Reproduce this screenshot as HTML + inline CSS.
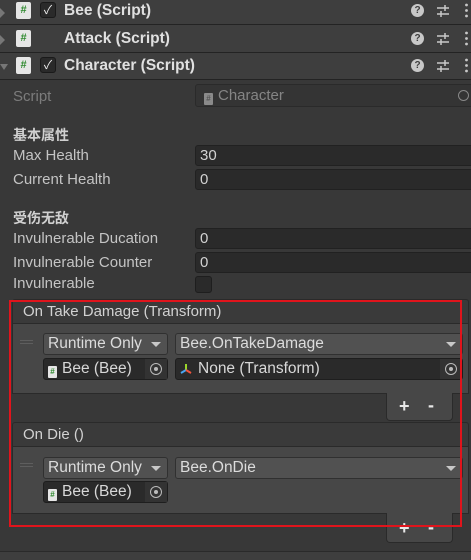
<!DOCTYPE html>
<html><head><meta charset="utf-8"><style>
*{box-sizing:border-box;margin:0;padding:0}
body{width:471px;height:560px;overflow:hidden;background:#383838;font-family:"Liberation Sans","Noto Sans CJK SC",sans-serif;position:relative;color:#c4c4c4}
.a{position:absolute}
.hdr{position:absolute;left:0;width:471px;height:27px;background:#3e3e3e;border-bottom:1px solid #232323}
.hdr .t{position:absolute;left:64px;top:4px;font-size:15.5px;font-weight:bold;color:#e0e0e0}
.si{position:absolute;left:16px;top:4px;width:15px;height:17px;background:#e6e6e6;border-radius:2px;color:#2f8a2f;font-size:11px;font-weight:bold;text-align:center;line-height:17px}
.cb{position:absolute;left:40px;top:4px;width:16px;height:16px;background:#2a2a2a;border:1px solid #1a1a1a;border-radius:3px;color:#eee;font-size:12px;text-align:center;line-height:14px}
.q{position:absolute;left:411px;top:6px;width:13px;height:13px;border-radius:50%;background:#c8c8c8;color:#3e3e3e;font-size:10px;font-weight:bold;text-align:center;line-height:13px}
.sl{position:absolute;left:436px;top:6px;width:14px;height:14px}
.dt{position:absolute;left:465px;top:5px;width:3px;height:15px}
.lbl{position:absolute;left:13px;font-size:15px;color:#c4c4c4}
.fld{position:absolute;left:195px;width:280px;height:21px;background:#2a2a2a;border:1px solid #212121;border-radius:3px;font-size:15px;color:#d2d2d2;padding-left:4px;line-height:19px}
.sec{position:absolute;left:13px;font-size:14px;font-weight:bold;color:#d0d0d0}
.eh{position:absolute;left:12px;width:457px;height:25px;background:#3a3a3a;border:1px solid #2a2a2a;border-radius:3px 3px 0 0;font-size:15px;color:#d2d2d2;padding-left:10px;line-height:23px}
.eb{position:absolute;left:12px;width:457px;background:#474747;border:1px solid #2a2a2a;border-top:none}
.dd{position:absolute;height:22px;background:#515151;border:1px solid #303030;border-radius:3px;font-size:15.5px;color:#dcdcdc;padding-left:4px;line-height:20px}
.dd:after{content:"";position:absolute;right:6px;top:8px;border-left:5px solid transparent;border-right:5px solid transparent;border-top:5px solid #c8c8c8}
.of{position:absolute;height:22px;background:#2a2a2a;border:1px solid #1e1e1e;border-radius:3px;font-size:15.5px;color:#d8d8d8;line-height:20px}
.tg{position:absolute;right:0;top:0;width:22px;height:20px;background:#333}
.tg:after{content:"";position:absolute;left:5px;top:4px;width:10px;height:10px;border:1.5px solid #bbb;border-radius:50%}
.tg:before{content:"";position:absolute;left:9px;top:8px;width:4px;height:4px;background:#bbb;border-radius:50%;z-index:1}
.ms{display:inline-block;width:9px;height:12px;background:#e6e6e6;border-radius:1px;color:#2f8a2f;font-size:8px;text-align:center;line-height:12px;vertical-align:-1px;margin:0 5px 0 4px;font-weight:bold}
.hd{position:absolute;left:20px;width:13px;height:4px;border-top:1px solid #5e5e5e;border-bottom:1px solid #5e5e5e}
.ft{position:absolute;left:386px;width:67px;height:28px;background:#474747;border:1px solid #2a2a2a;border-top:none;border-radius:0 0 4px 4px;color:#e8e8e8;font-size:18px;font-weight:bold}
</style></head><body>

<div class="hdr" style="top:-2px;height:27px"><div style="position:absolute;left:0;top:10px;border-top:5px solid transparent;border-bottom:5px solid transparent;border-left:5px solid #777"></div><div class="si">#</div><div class="cb">✓</div><div class="t">Bee (Script)</div><div class="q">?</div>
<svg class="sl" viewBox="0 0 14 14"><g stroke="#c8c8c8" stroke-width="1.5"><line x1="1" y1="4" x2="13" y2="4"/><line x1="1" y1="10" x2="13" y2="10"/><line x1="9" y1="1" x2="9" y2="7"/><line x1="5" y1="7" x2="5" y2="13"/></g></svg>
<svg class="dt" viewBox="0 0 3 15"><g fill="#c8c8c8"><circle cx="1.5" cy="2" r="1.4"/><circle cx="1.5" cy="7.5" r="1.4"/><circle cx="1.5" cy="13" r="1.4"/></g></svg></div>

<div class="hdr" style="top:25px;height:28px"><div style="position:absolute;left:0;top:10px;border-top:5px solid transparent;border-bottom:5px solid transparent;border-left:5px solid #777"></div><div class="si" style="top:5px">#</div><div class="t" style="top:5px">Attack (Script)</div><div class="q" style="top:7px">?</div>
<svg class="sl" style="top:7px" viewBox="0 0 14 14"><g stroke="#c8c8c8" stroke-width="1.5"><line x1="1" y1="4" x2="13" y2="4"/><line x1="1" y1="10" x2="13" y2="10"/><line x1="9" y1="1" x2="9" y2="7"/><line x1="5" y1="7" x2="5" y2="13"/></g></svg>
<svg class="dt" style="top:6px" viewBox="0 0 3 15"><g fill="#c8c8c8"><circle cx="1.5" cy="2" r="1.4"/><circle cx="1.5" cy="7.5" r="1.4"/><circle cx="1.5" cy="13" r="1.4"/></g></svg></div>

<div class="hdr" style="top:53px;height:27px"><div style="position:absolute;left:0;top:11px;border-left:4px solid transparent;border-right:4px solid transparent;border-top:6px solid #777"></div><div class="si">#</div><div class="cb">✓</div><div class="t">Character (Script)</div><div class="q">?</div>
<svg class="sl" viewBox="0 0 14 14"><g stroke="#c8c8c8" stroke-width="1.5"><line x1="1" y1="4" x2="13" y2="4"/><line x1="1" y1="10" x2="13" y2="10"/><line x1="9" y1="1" x2="9" y2="7"/><line x1="5" y1="7" x2="5" y2="13"/></g></svg>
<svg class="dt" viewBox="0 0 3 15"><g fill="#c8c8c8"><circle cx="1.5" cy="2" r="1.4"/><circle cx="1.5" cy="7.5" r="1.4"/><circle cx="1.5" cy="13" r="1.4"/></g></svg></div>

<div class="lbl" style="top:88px;color:#7c7c7c">Script</div>
<div class="fld" style="top:84px;height:23px;background:#343434;border-color:#2a2a2a;color:#858585;line-height:21px"><span class="ms" style="background:#8a8a8a;color:#555">#</span>Character<div style="position:absolute;left:262px;top:5px;width:11px;height:11px;border:1.5px solid #888;border-radius:50%"></div></div>

<div class="sec" style="top:125px">基本属性</div>
<div class="lbl" style="top:147px">Max Health</div>
<div class="fld" style="top:145px">30</div>
<div class="lbl" style="top:171px">Current Health</div>
<div class="fld" style="top:169px">0</div>

<div class="sec" style="top:208px">受伤无敌</div>
<div class="lbl" style="top:230px">Invulnerable Ducation</div>
<div class="fld" style="top:228px">0</div>
<div class="lbl" style="top:254px">Invulnerable Counter</div>
<div class="fld" style="top:252px">0</div>
<div class="lbl" style="top:275px">Invulnerable</div>
<div class="a" style="left:195px;top:276px;width:17px;height:17px;background:#2a2a2a;border:1px solid #1e1e1e;border-radius:3px"></div>

<div class="eh" style="top:299px">On Take Damage (Transform)</div>
<div class="eb" style="top:324px;height:70px"></div>
<div class="hd" style="top:340px"></div>
<div class="dd" style="left:43px;top:333px;width:125px">Runtime Only</div>
<div class="dd" style="left:175px;top:333px;width:288px">Bee.OnTakeDamage</div>
<div class="of" style="left:43px;top:358px;width:125px"><span class="ms">#</span>Bee (Bee)<div class="tg"></div></div>
<div class="of" style="left:175px;top:358px;width:288px"><svg style="position:absolute;left:4px;top:4px" width="12" height="12" viewBox="0 0 12 12"><line x1="6" y1="7" x2="6" y2="1" stroke="#9bd62a" stroke-width="2"/><line x1="6" y1="7" x2="1" y2="10" stroke="#49a6f2" stroke-width="2"/><line x1="6" y1="7" x2="11" y2="10" stroke="#f2533c" stroke-width="2"/></svg><span style="margin-left:22px">None (Transform)</span><div class="tg"></div></div>
<div class="ft" style="top:393px"><span style="position:absolute;left:12px;top:3px">+</span><span style="position:absolute;left:41px;top:2px">-</span></div>

<div class="eh" style="top:422px">On Die ()</div>
<div class="eb" style="top:447px;height:67px"></div>
<div class="hd" style="top:463px"></div>
<div class="dd" style="left:43px;top:457px;width:125px">Runtime Only</div>
<div class="dd" style="left:175px;top:457px;width:288px">Bee.OnDie</div>
<div class="of" style="left:43px;top:481px;width:125px"><span class="ms">#</span>Bee (Bee)<div class="tg"></div></div>
<div class="ft" style="top:513px;height:30px"><span style="position:absolute;left:12px;top:5px">+</span><span style="position:absolute;left:41px;top:4px">-</span></div>

<div class="a" style="left:0;top:551px;width:471px;height:1px;background:#2a2a2a"></div>
<div class="a" style="left:0;top:552px;width:471px;height:8px;background:#3e3e3e"></div>

<div class="a" style="left:9px;top:300px;width:453px;height:227px;border:2px solid #e0141c"></div>
</body></html>
